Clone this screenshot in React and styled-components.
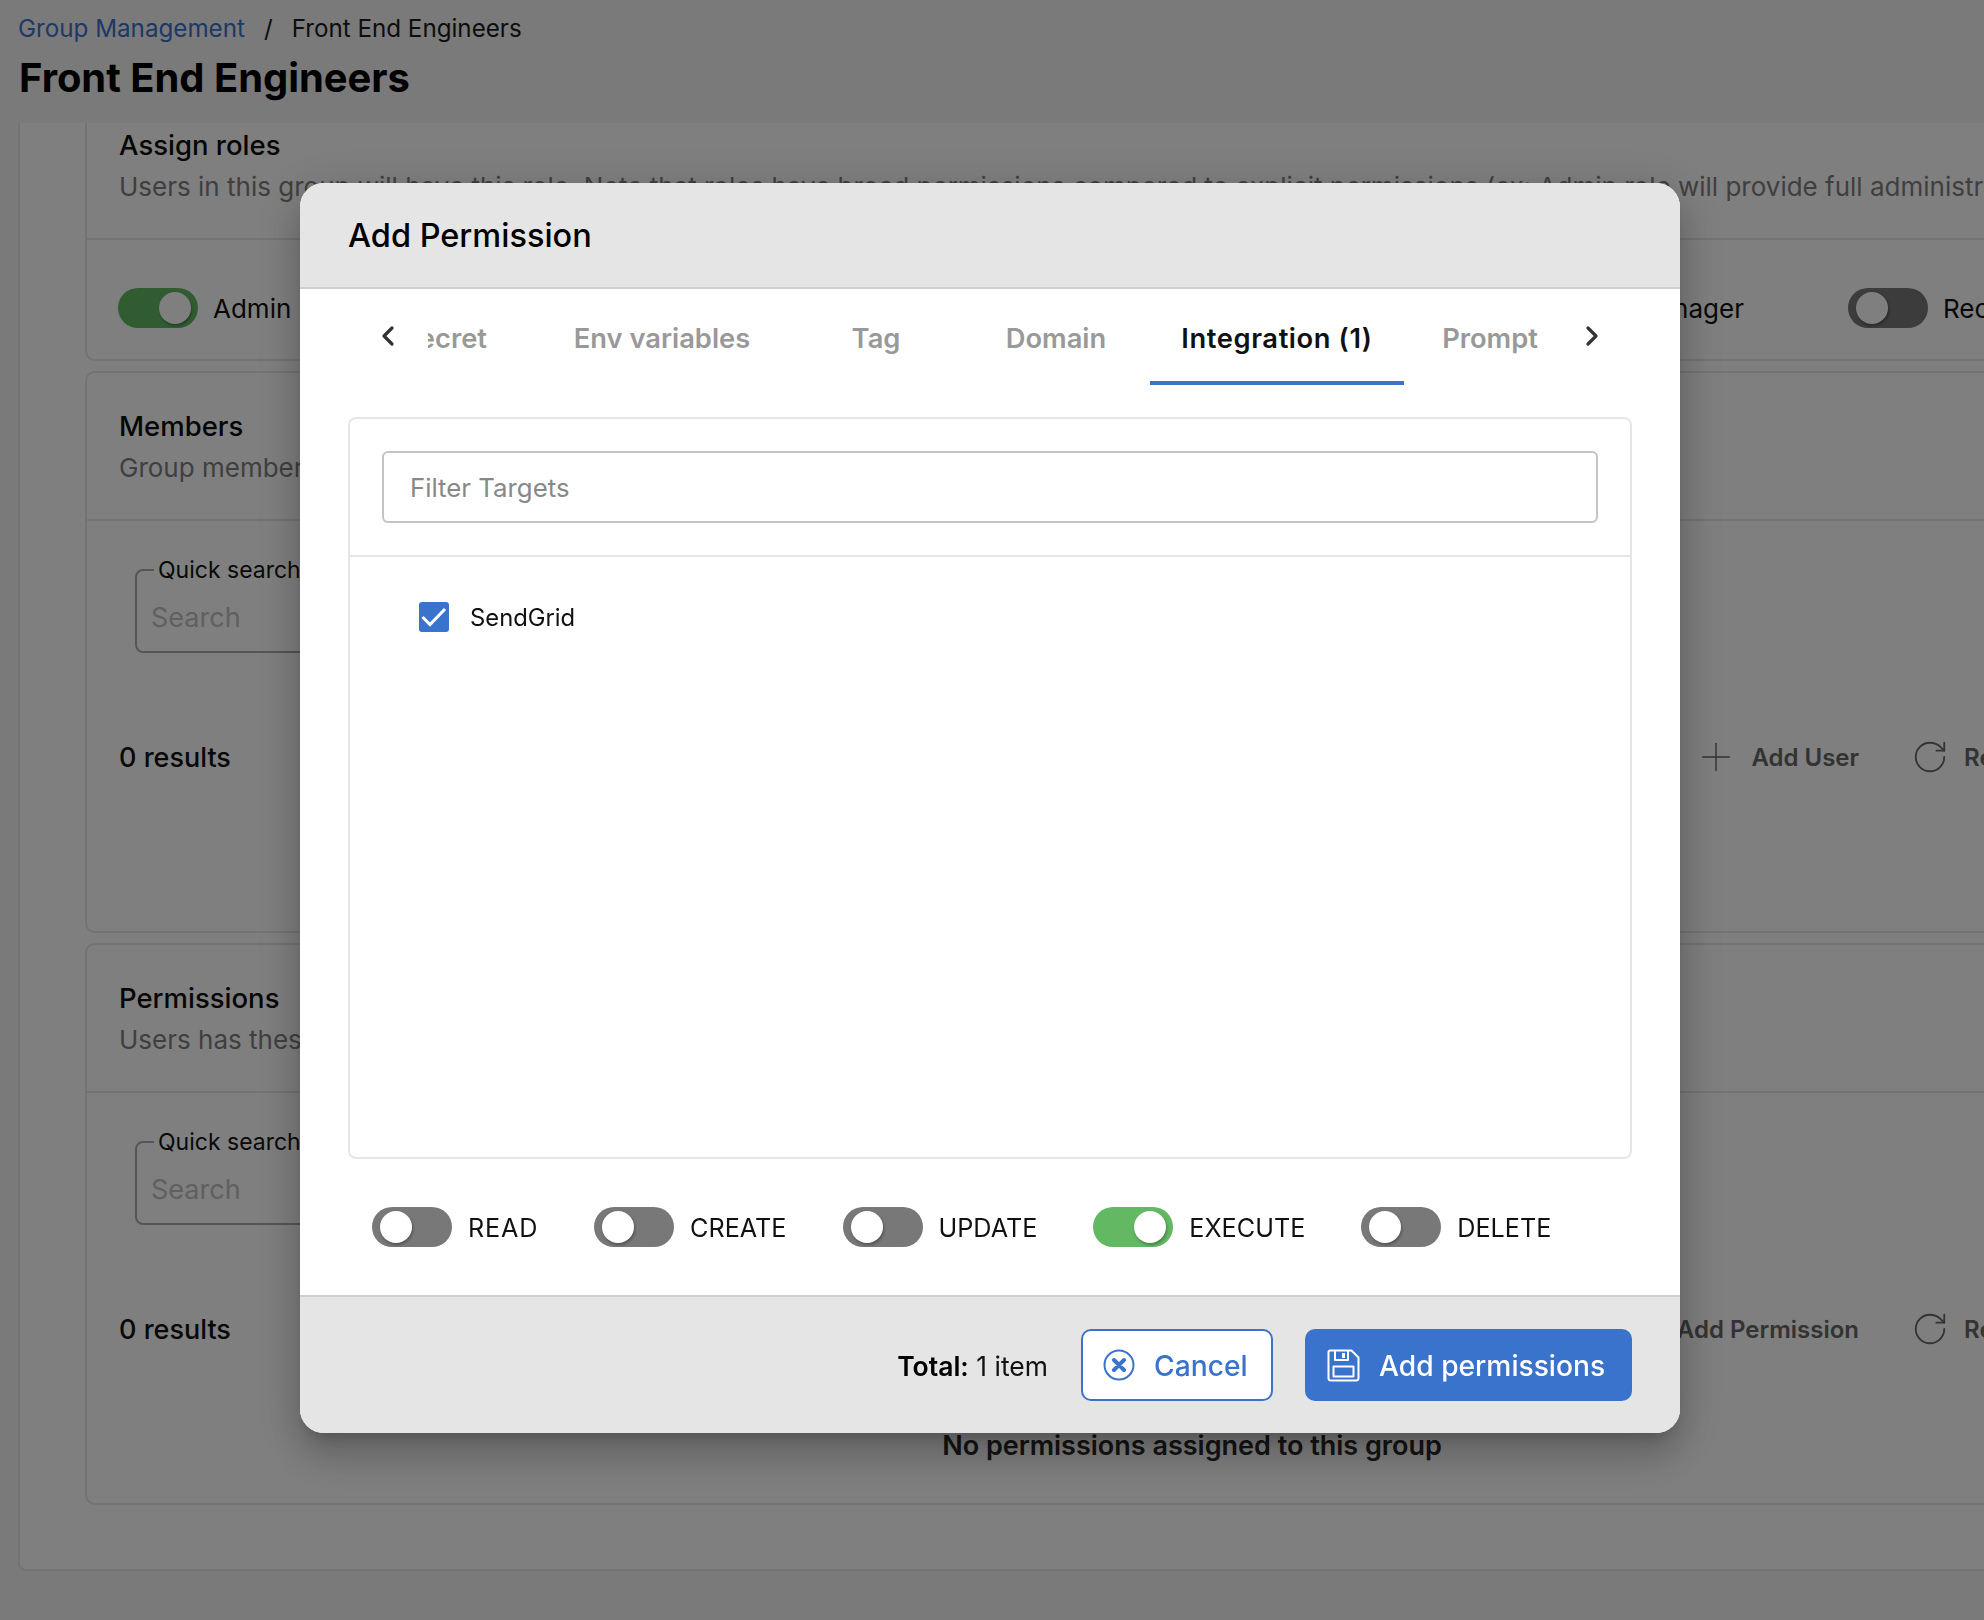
import React from "react";
import styled, { createGlobalStyle } from "styled-components";
import { ChevronLeft, ChevronRight, Plus, RotateCw } from "lucide-react";

const Global = createGlobalStyle`
  html, body { margin: 0; padding: 0; width: 1984px; height: 1620px; overflow: hidden; background: #f4f4f4; }
  body { font-family: Inter, "Noto Sans", sans-serif; color: #000; }
  * { box-sizing: border-box; }
`;

const Page = styled.div`
  width: 1984px;
  height: 1620px;
  overflow: hidden;
  display: flex;
  flex-direction: column;
`;
const Header = styled.header`
  height: 123px;
  padding: 14px 0 0 18px;
  flex: none;
`;
const Breadcrumb = styled.nav`
  display: flex;
  align-items: center;
  height: 30px;
  font-size: 24.2px;
  line-height: 30px;
  color: #1a1a1a;
`;
const CrumbLink = styled.span`
  color: #3a73cc;
`;
const CrumbSep = styled.span`
  margin: 0 19px;
`;
const Title = styled.h1`
  margin: 9px 0 0 1px;
  font-size: 39.9px;
  line-height: 50px;
  font-weight: 700;
  color: #000;
`;
const Sheet = styled.main`
  flex: none;
  width: 2320px;
  height: 1448px;
  margin-left: 18px;
  padding: 0 0 0 65px;
  background: #fff;
  border: 2px solid #e6e6e6;
  border-top: none;
  border-radius: 0 0 8px 8px;
  overflow: hidden;
`;
const Card = styled.section`
  width: 2214px;
  height: ${(p) => p.$height}px;
  margin-bottom: 10px;
  background: #fff;
  border: 2px solid #e6e6e6;
  border-top-width: ${(p) => (p.$clipped ? 0 : 2)}px;
  border-radius: ${(p) => (p.$clipped ? "0 0 10px 10px" : "10px")};
`;
const CardHead = styled.div`
  padding: ${(p) => (p.$clipped ? 4 : 35)}px 32px 33px;
  border-bottom: 2px solid #e6e6e6;
`;
const CardTitle = styled.h2`
  margin: 0;
  font-size: 27.5px;
  line-height: 36px;
  font-weight: 500;
  color: #0d0d0d;
`;
const CardSub = styled.p`
  margin: 6px 0 0;
  font-size: 26px;
  line-height: 36px;
  font-weight: 400;
  color: #7f7f7f;
  white-space: nowrap;
`;
const RoleRow = styled.div`
  display: flex;
  gap: 104px;
  padding: 48px 0 0 31px;
`;
const RoleItem = styled.div`
  display: flex;
  align-items: center;
  gap: 15px;
  flex: none;
  width: ${(p) => (p.$width ? `${p.$width}px` : "auto")};
  font-size: 26px;
  color: #111;
`;
const Track = styled.span`
  display: flex;
  flex: none;
  width: 80px;
  height: 40px;
  padding: 4px 7px 4px 8px;
  border-radius: 20px;
  background: ${(p) => (p.$on ? "#62b863" : "#787878")};
  justify-content: ${(p) => (p.$on ? "flex-end" : "flex-start")};
`;
const Knob = styled.span`
  width: 32px;
  height: 32px;
  border-radius: 50%;
  background: #fff;
  box-shadow: 1px 2px 3px rgba(0, 0, 0, 0.3);
`;
const Search = styled.fieldset`
  width: 640px;
  height: 97px;
  margin: 35px 0 0 48px;
  padding: 0 0 0 14px;
  border: 2px solid #aaa;
  border-radius: 8px;
`;
const SearchLegend = styled.legend`
  margin-left: 3px;
  padding: 0 4px;
  font-size: 23px;
  line-height: 28px;
  color: #111;
`;
const SearchHint = styled.div`
  padding-top: 9px;
  font-size: 27px;
  line-height: 50px;
  color: #c0c0c0;
`;
const ResultsRow = styled.div`
  display: flex;
  align-items: center;
  height: 40px;
  margin-top: 84px;
  padding: 0 243px 0 32px;
`;
const Results = styled.span`
  font-size: 27px;
  font-weight: 500;
  color: #111;
  margin-right: auto;
`;
const Action = styled.span`
  display: flex;
  align-items: center;
  gap: ${(p) => p.$gap}px;
  margin-left: ${(p) => p.$left || 0}px;
  font-size: 24px;
  font-weight: 600;
  color: #666;
  svg { flex: none; }
`;
const Empty = styled.div`
  margin-top: 79px;
  text-align: center;
  font-size: 27px;
  line-height: 36px;
  font-weight: 600;
  color: #282828;
`;

const Overlay = styled.div`
  position: fixed;
  inset: 0;
  padding: 183px 0 0 300px;
  background: rgba(0, 0, 0, 0.5);
`;
const Modal = styled.div`
  display: flex;
  flex-direction: column;
  width: 1380px;
  height: 1250px;
  background: #fff;
  border-radius: 24px;
  overflow: hidden;
`;
const ModalFrame = styled.div`
  width: 1380px;
  height: 1250px;
  border-radius: 24px;
  box-shadow: 0 11px 15px -7px rgba(0, 0, 0, 0.2), 0 24px 38px 3px rgba(0, 0, 0, 0.14), 0 9px 46px 8px rgba(0, 0, 0, 0.12);
`;
const ModalHead = styled.div`
  display: flex;
  align-items: center;
  flex: none;
  height: 106px;
  padding: 0 48px;
  background: #e5e5e5;
  border-bottom: 2px solid #d0d0d0;
`;
const ModalTitle = styled.h3`
  margin: 0;
  font-size: 32.5px;
  font-weight: 500;
  color: #000;
`;
const TabRow = styled.div`
  display: flex;
  align-items: flex-start;
  flex: none;
  height: 96px;
  padding-left: 72px;
`;
const ScrollButton = styled.span`
  display: flex;
  align-items: center;
  justify-content: center;
  flex: none;
  width: 32px;
  height: 94px;
  margin-right: ${(p) => p.$after}px;
  color: #333;
`;
const TabStrip = styled.div`
  display: flex;
  flex: none;
  width: 1148px;
  height: 96px;
  overflow: hidden;
`;
const Tab = styled.div`
  display: flex;
  align-items: center;
  justify-content: center;
  flex: none;
  width: ${(p) => p.$width}px;
  margin-left: ${(p) => p.$shift || 0}px;
  height: 96px;
  padding-top: 6px;
  font-size: 27.3px;
  font-weight: 600;
  white-space: nowrap;
  letter-spacing: ${(p) => (p.$active ? "0.6px" : "0")};
  color: ${(p) => (p.$active ? "#111" : "#999")};
  border-bottom: 4px solid ${(p) => (p.$active ? "#3a73cc" : "transparent")};
`;
const Panel = styled.div`
  flex: none;
  width: 1284px;
  height: 742px;
  margin: 32px 0 0 48px;
  border: 2px solid #e6e6e6;
  border-radius: 8px;
`;
const FilterBox = styled.div`
  padding: 32px 32px 32px;
  border-bottom: 2px solid #e6e6e6;
`;
const FilterInput = styled.div`
  display: flex;
  align-items: center;
  height: 72px;
  padding-left: 26px;
  border: 2px solid #c4c4c4;
  border-radius: 6px;
  font-size: 25.8px;
  color: #888;
`;
const Option = styled.div`
  display: flex;
  align-items: center;
  gap: 21px;
  padding: 45px 0 0 69px;
  font-size: 23.8px;
  color: #111;
`;
const Check = styled.span`
  display: flex;
  width: 30px;
  height: 30px;
  border-radius: 3px;
  background: #3a73cc;
`;
const ToggleRow = styled.div`
  display: flex;
  flex: none;
  gap: 56px;
  margin-top: 48px;
  padding-left: 72px;
`;
const ToggleItem = styled.div`
  display: flex;
  align-items: center;
  gap: 16px;
`;
const ToggleLabel = styled.span`
  padding-top: 2px;
  font-size: 25.2px;
  letter-spacing: ${(p) => p.$track || 0}px;
  color: #111;
`;
const Footer = styled.div`
  display: flex;
  align-items: center;
  justify-content: flex-end;
  flex: 1;
  margin-top: 48px;
  padding: 0 48px 0 0;
  background: #e5e5e5;
  border-top: 2px solid #d0d0d0;
`;
const Total = styled.div`
  margin-right: 33px;
  padding-top: 2px;
  font-size: 26.5px;
  color: #111;
  b { font-weight: 600; color: #000; }
`;
const Button = styled.button`
  display: flex;
  align-items: center;
  gap: 19px;
  height: 72px;
  width: ${(p) => p.$width}px;
  padding: 0 0 0 20px;
  margin-left: ${(p) => p.$left || 0}px;
  border: 2px solid #3a73cc;
  border-radius: 10px;
  background: ${(p) => (p.$primary ? "#3a73cc" : "#fff")};
  color: ${(p) => (p.$primary ? "#fff" : "#3a73cc")};
  font-family: inherit;
  font-size: 28.2px;
  font-weight: 500;
  svg { flex: none; }
`;
const ButtonText = styled.span`
  padding-top: 2px;
`;

const Toggle = ({ on }) => (
  <Track $on={on}>
    <Knob />
  </Track>
);

const CancelIcon = () => (
  <svg width="32" height="32" viewBox="0 0 32 32" fill="none" stroke="currentColor">
    <circle cx="16" cy="16" r="14.5" strokeWidth="2" />
    <path d="M11 11l10 10M21 11L11 21" strokeWidth="4" strokeLinecap="round" />
  </svg>
);

const SaveIcon = () => (
  <svg width="33" height="33" viewBox="0 0 33 33" fill="none" stroke="currentColor" strokeWidth="2" strokeLinejoin="round">
    <path d="M3 1.5h21.5l7 7V29a2.5 2.5 0 0 1-2.5 2.5H4A2.5 2.5 0 0 1 1.5 29V3A1.5 1.5 0 0 1 3 1.5z" />
    <path d="M8 2v9h13V2" />
    <path d="M16.5 4v5" strokeWidth="3" />
    <rect x="6.5" y="17.5" width="20" height="10" />
  </svg>
);

const CheckIcon = () => (
  <svg width="30" height="30" viewBox="0 0 30 30" fill="none" stroke="#fff" strokeWidth="3">
    <path d="M3.5 15l7.5 7.5L26 7" />
  </svg>
);

const ResultActions = ({ label }) => (
  <>
    <Results>0 results</Results>
    <Action $gap={12}>
      <Plus size={46} strokeWidth={0.75} />
      {label}
    </Action>
    <Action $gap={15} $left={52}>
      <RotateCw size={38} strokeWidth={1.15} />
      Refresh
    </Action>
  </>
);

const PageBody = () => (
  <Sheet>
    <Card $clipped $height={238}>
      <CardHead $clipped>
        <CardTitle>Assign roles</CardTitle>
        <CardSub>
          Users in this group will have this role. Note that roles have broad permissions compared to explicit permissions
          (ex: Admin role will provide full administrative access)
        </CardSub>
      </CardHead>
      <RoleRow>
        <RoleItem $width={1318}>
          <Toggle on />
          Admin
        </RoleItem>
        <RoleItem>
          <Toggle />
          Manager
        </RoleItem>
        <RoleItem>
          <Toggle />
          Recruiter
        </RoleItem>
      </RoleRow>
    </Card>
    <Card $height={562}>
      <CardHead>
        <CardTitle>Members</CardTitle>
        <CardSub>Group members</CardSub>
      </CardHead>
      <Search>
        <SearchLegend>Quick search</SearchLegend>
        <SearchHint>Search</SearchHint>
      </Search>
      <ResultsRow>
        <ResultActions label="Add User" />
      </ResultsRow>
    </Card>
    <Card $height={562}>
      <CardHead>
        <CardTitle>Permissions</CardTitle>
        <CardSub>Users has these permissions</CardSub>
      </CardHead>
      <Search>
        <SearchLegend>Quick search</SearchLegend>
        <SearchHint>Search</SearchHint>
      </Search>
      <ResultsRow>
        <ResultActions label="Add Permission" />
      </ResultsRow>
      <Empty>No permissions assigned to this group</Empty>
    </Card>
  </Sheet>
);

const AddPermissionModal = () => (
  <Overlay>
    <ModalFrame>
      <Modal>
        <ModalHead>
          <ModalTitle>Add Permission</ModalTitle>
        </ModalHead>
        <TabRow>
          <ScrollButton $after={24}>
            <ChevronLeft size={32} strokeWidth={2.4} />
          </ScrollButton>
          <TabStrip>
            <Tab $width={180} $shift={-74}>Secret</Tab>
            <Tab $width={256}>Env variables</Tab>
            <Tab $width={172}>Tag</Tab>
            <Tab $width={188}>Domain</Tab>
            <Tab $width={254} $active>Integration (1)</Tab>
            <Tab $width={172}>Prompt</Tab>
          </TabStrip>
          <ScrollButton $after={0}>
            <ChevronRight size={32} strokeWidth={2.4} />
          </ScrollButton>
        </TabRow>
        <Panel>
          <FilterBox>
            <FilterInput>Filter Targets</FilterInput>
          </FilterBox>
          <Option>
            <Check>
              <CheckIcon />
            </Check>
            SendGrid
          </Option>
        </Panel>
        <ToggleRow>
          <ToggleItem><Toggle /><ToggleLabel $track={0.8}>READ</ToggleLabel></ToggleItem>
          <ToggleItem><Toggle /><ToggleLabel>CREATE</ToggleLabel></ToggleItem>
          <ToggleItem><Toggle /><ToggleLabel>UPDATE</ToggleLabel></ToggleItem>
          <ToggleItem><Toggle on /><ToggleLabel>EXECUTE</ToggleLabel></ToggleItem>
          <ToggleItem><Toggle /><ToggleLabel>DELETE</ToggleLabel></ToggleItem>
        </ToggleRow>
        <Footer>
          <Total><b>Total:</b> 1 item</Total>
          <Button $width={192}>
            <CancelIcon />
            <ButtonText>Cancel</ButtonText>
          </Button>
          <Button $primary $width={327} $left={32}>
            <SaveIcon />
            <ButtonText>Add permissions</ButtonText>
          </Button>
        </Footer>
      </Modal>
    </ModalFrame>
  </Overlay>
);

export default function App() {
  return (
    <>
      <Global />
      <Page>
        <Header>
          <Breadcrumb>
            <CrumbLink>Group Management</CrumbLink>
            <CrumbSep>/</CrumbSep>
            Front End Engineers
          </Breadcrumb>
          <Title>Front End Engineers</Title>
        </Header>
        <PageBody />
      </Page>
      <AddPermissionModal />
    </>
  );
}
